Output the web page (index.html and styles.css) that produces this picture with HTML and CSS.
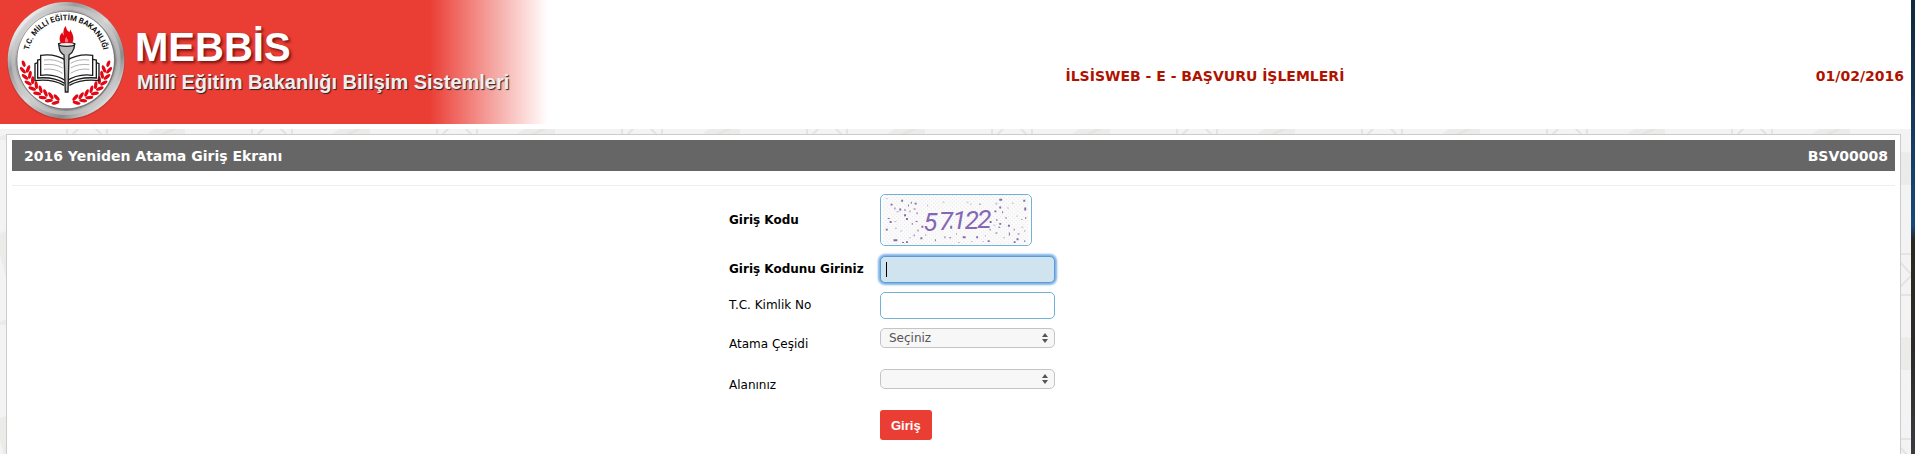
FILE: index.html
```html
<!DOCTYPE html>
<html lang="tr">
<head>
<meta charset="utf-8">
<title>MEBBİS</title>
<link rel="stylesheet" href="styles.css">
</head>
<body>
<div class="page">
  <svg class="backdrop" aria-hidden="true">
    <defs>
      <pattern id="tile" width="185" height="185" patternUnits="userSpaceOnUse">
        <g fill="#ebebe9">
          <path d="M143 140Q150 125 181 124Q212 125 216 140Z"/>
          <path d="M-3 140Q0 130 31 140Z"/>
          <path d="M30 166Q55 138 82 166L76 216H36Z"/>
          <path d="M0 48L6 46V92L0 70Z"/>
        </g>
        <g fill="none" stroke="#e4e4e2" stroke-width="2">
          <path d="M67 110V150M107 110V150M67 140L80 127M94 127L107 140M181 126L150 140M181 126L212 140"/>
          <path d="M40 69H76M40 110H76M48 75L62 90L48 104"/>
        </g>
      </pattern>
    </defs>
    <rect width="100%" height="100%" fill="url(#tile)"/>
  </svg>

  <header class="header">
    <div class="banner">
      <svg class="emblem" viewBox="0 0 384 372" role="img" aria-label="T.C. Millî Eğitim Bakanlığı">
        <defs>
          <linearGradient id="ring" x1="0" y1="0" x2="1" y2="1">
            <stop offset="0" stop-color="#8b8b8b"/><stop offset=".14" stop-color="#f4f4f4"/>
            <stop offset=".3" stop-color="#999"/><stop offset=".5" stop-color="#d8d8d8"/>
            <stop offset=".72" stop-color="#8a8a8a"/><stop offset=".88" stop-color="#eee"/>
            <stop offset="1" stop-color="#777"/>
          </linearGradient>
          <path id="arc" d="M86 196A114 114 0 1 1 310 196"/>
          <g id="leaves" fill="#e30613">
            <ellipse cx="196" cy="296" rx="12" ry="5" transform="rotate(35 196 296)"/>
            <ellipse cx="196" cy="312" rx="12" ry="5" transform="rotate(-28 196 312)"/>
          </g>
          <g id="laurel">
            <use href="#leaves" transform="rotate(13 197 180)"/>
            <use href="#leaves" transform="rotate(22 197 180)"/>
            <use href="#leaves" transform="rotate(31 197 180)"/>
            <use href="#leaves" transform="rotate(40 197 180)"/>
            <use href="#leaves" transform="rotate(49 197 180)"/>
            <use href="#leaves" transform="rotate(58 197 180)"/>
            <use href="#leaves" transform="rotate(67 197 180)"/>
            <use href="#leaves" transform="rotate(76 197 180)"/>
            <ellipse cx="71" cy="191" rx="5" ry="10" fill="#e30613" transform="rotate(-20 71 191)"/>
          </g>
        </defs>
        <circle cx="198" cy="184" r="177" fill="#a33" opacity=".5"/>
        <circle cx="198" cy="181" r="175" fill="url(#ring)"/>
        <circle cx="198" cy="181" r="158" fill="none" stroke="#c9c9c9" stroke-width="12" opacity=".6"/>
        <circle cx="198" cy="181" r="148" fill="#777"/>
        <circle cx="197" cy="180" r="145" fill="#fff"/>
        <text class="emblem-text"><textPath href="#arc" startOffset="50%" text-anchor="middle">T.C. MİLLİ EĞİTİM BAKANLIĞI</textPath></text>
        <use href="#laurel"/>
        <use href="#laurel" transform="translate(396 0) scale(-1 1)"/>
        <g fill="none" stroke="#1c1c1c" stroke-width="4">
          <path d="M199 182Q166 160 122 166V226Q166 220 199 244Q232 220 278 226V166Q234 160 199 182"/>
          <path d="M122 178L113 180V234Q162 230 194 250M278 178L289 180V234Q238 230 205 250"/>
          <path d="M113 188L105 191V242Q156 236 192 256M289 188L297 191V242Q246 236 208 256"/>
          <path stroke-width="2" stroke="#888" d="M132 180Q165 176 188 190M132 194Q165 190 188 204M132 208Q165 204 188 220M268 180Q235 176 212 190M268 194Q235 190 212 204M268 208Q235 204 212 220"/>
        </g>
        <path d="M176 131H224L222 145Q218 158 207 165L204 276H196L192 165Q180 158 178 145Z" fill="#bbb" stroke="#222" stroke-width="4"/>
        <ellipse cx="200" cy="133" rx="24" ry="6" fill="#eee" stroke="#222" stroke-width="4"/>
        <path d="M182 129Q173 112 187 97Q188 105 192 106Q186 91 197 78Q199 91 208 97Q211 93 210 88Q226 112 217 129Z" fill="#e30613"/>
        <path d="M196 127Q192 119 200 110Q200 117 204 119Q206 123 203 127Z" fill="#f77"/>
      </svg>
      <div class="brand">
        <div class="brand-name">MEBBİS</div>
        <div class="brand-sub">Millî Eğitim Bakanlığı Bilişim Sistemleri</div>
      </div>
    </div>
    <div class="app-title">İLSİSWEB - E - BAŞVURU İŞLEMLERİ</div>
    <div class="date">01/02/2016</div>
  </header>

  <main class="panel">
    <div class="bar"><h1 class="bar-title">2016 Yeniden Atama Giriş Ekranı</h1><span>BSV00008</span></div>
    <form class="form">
      <div class="row row-code">
        <span class="label strong">Giriş Kodu</span>
        <svg class="captcha" viewBox="0 0 152 52" role="img" aria-label="57122">
          <defs><pattern id="grain" width="4" height="4" patternUnits="userSpaceOnUse"><path d="M0 0h1v1H0zM2 2h1v1H2z" fill="#e4e4e4"/></pattern></defs>
          <rect width="152" height="52" fill="#fbfbfb"/><rect width="152" height="52" fill="url(#grain)"/>
          <text class="captcha-text" x="42 58 72 85 98" y="37 36 35 35 34">57122</text>
          <g fill="#8569a8">
            <path d="M8 9h2v2h-2zM12 13h1v2h-1zM19 5h2v2h-2zM17 14h2v2h-2zM22 15h2v1h-2zM22 20h2v2h-2zM26 10h1v2h-1zM29 7h1v2h-1zM33 8h2v2h-2zM32 14h2v1h-2zM35 18h1v2h-1zM5 24h2v1h-2zM7 27h2v2h-2zM3 35h2v2h-2zM13 34h1v1h-1zM24 24h2v2h-2zM30 29h1v2h-1zM34 27h2v1h-2zM36 36h1v2h-1zM40 32h2v2h-2zM11 46h4v2h-4zM20 49h2v1h-2zM24 48h2v2h-2zM32 41h1v2h-1zM39 44h2v2h-2zM44 41h1v1h-1z"/>
            <path d="M70 32h2v3h-2zM54 46h1v2h-1zM64 43h1v2h-1zM69 44h2v1h-2zM76 40h1v1h-1zM83 43h3v2h-3zM92 48h1v1h-1zM97 43h2v2h-2zM91 9h1v1h-1zM100 9h2v1h-2zM109 47h2v2h-2zM106 42h1v1h-1zM121 4h3v2h-3zM121 12h2v2h-2zM116 16h2v2h-2zM124 17h1v2h-1zM111 27h2v2h-2zM118 25h1v2h-1zM121 29h2v2h-2zM111 35h1v2h-1zM117 39h2v1h-2zM120 33h2v1h-2zM130 31h2v2h-2zM131 39h1v3h-1zM136 35h1v2h-1zM140 40h2v1h-2zM136 48h2v2h-2zM139 45h2v2h-2zM146 5h2v2h-2zM147 13h2v3h-2zM148 23h1v2h-1zM144 25h1v1h-1zM147 37h1v1h-1zM147 47h1v2h-1z"/>
          </g>
          <path fill="#c5b8d6" d="M3 3h2v1h-2zM14 17h3v1h-3zM27 16h2v2h-2zM12 27h2v1h-2zM18 37h2v1h-2zM27 44h2v1h-2zM46 10h1v2h-1zM62 7h2v1h-2zM78 49h2v1h-2zM87 7h2v1h-2zM103 48h2v1h-2zM117 8h2v2h-2zM129 13h2v1h-2zM127 23h2v2h-2zM115 31h2v1h-2zM139 21h1v2h-1zM134 8h2v1h-2zM125 44h2v1h-2zM144 33h2v1h-2z"/>
        </svg>
      </div>
      <div class="row">
        <label class="label strong" for="code">Giriş Kodunu Giriniz</label>
        <span class="field"><input class="input active" id="code" type="text" autocomplete="off"><span class="caret"></span></span>
      </div>
      <div class="row">
        <label class="label" for="tc">T.C. Kimlik No</label>
        <input class="input" id="tc" type="text">
      </div>
      <div class="row row-select">
        <label class="label" for="kind">Atama Çeşidi</label>
        <span class="field field-select"><select class="select" id="kind"><option>Seçiniz</option></select><svg class="arrows" viewBox="0 0 6 12" aria-hidden="true"><path d="M3 1L6 5H0ZM0 7H6L3 11Z"/></svg></span>
      </div>
      <div class="row row-select">
        <label class="label" for="field">Alanınız</label>
        <span class="field field-select"><select class="select" id="field"><option></option></select><svg class="arrows" viewBox="0 0 6 12" aria-hidden="true"><path d="M3 1L6 5H0ZM0 7H6L3 11Z"/></svg></span>
      </div>
      <div class="row row-submit"><span></span><button class="submit" type="submit">Giriş</button></div>
    </form>
  </main>
</div>
<div class="edge"></div>
</body>
</html>
```
FILE: styles.css
```css
* { box-sizing: border-box; }
body {
  margin: 0;
  min-height: 100vh;
  display: flex;
  font-family: Verdana, "DejaVu Sans", sans-serif;
  font-size: 12px;
  color: #000;
}
.page {
  position: relative;
  flex: 1;
  display: flex;
  flex-direction: column;
  background: #f3f3f3;
}
.backdrop { position: absolute; inset: 0; width: 100%; height: 100%; }
.edge {
  width: 4px;
  background: linear-gradient(#12283c 0, #17395a 120px, #174a78 225px, #292825 240px, #2c2b29 350px, #3a3b40 454px);
}
.header {
  position: relative;
  display: flex;
  background: #fff;
  padding-bottom: 5px;
  padding-right: 7px;
  color: #b01200;
  font-size: 14px;
  font-weight: bold;
}
.banner {
  display: flex;
  width: 548px;
  height: 124px;
  background: linear-gradient(to right, #ea3e35 430px, #fff 548px);
}
.emblem { width: 128px; height: 124px; flex: none; }
.emblem-text { font: bold 23px Roboto, sans-serif; fill: #111; }
.brand {
  padding: 24px 0 0 7px;
  font-family: "Liberation Sans", Arial, sans-serif;
  white-space: nowrap;
}
.brand-name {
  font-size: 40px;
  line-height: 46px;
  color: #fff;
  text-shadow: 2px 2px 3px rgba(70, 0, 0, .7);
}
.brand-sub {
  padding-left: 2px;
  font-size: 20px;
  line-height: 24px;
  color: #eee;
  text-shadow: 1px 1px 1px #222;
}
.app-title { flex: 1; padding: 67px 0 0 46px; line-height: 18px; text-align: center; }
.date { padding-top: 67px; line-height: 18px; }
.panel {
  position: relative;
  flex: 1;
  margin: 5px 10px 0 6px;
  padding: 5px 5px 0;
  background: #fff;
  border: 1px solid #ccc;
  border-bottom: 0;
}
.bar {
  display: flex;
  justify-content: space-between;
  align-items: center;
  height: 31px;
  padding: 0 7px 0 12px;
  background: #666;
  color: #fff;
  font-size: 14px;
  font-weight: bold;
}
.bar-title { margin: 0; font-size: 14px; }
.form {
  margin-top: 14px;
  padding-top: 8px;
  border-top: 1px solid #eee;
  display: flex;
  flex-direction: column;
  align-items: center;
}
.row {
  display: grid;
  grid-template-columns: 151px 1fr;
  width: 449px;
  min-height: 36px;
  align-items: center;
  justify-items: start;
}
.row-code { min-height: 52px; margin-bottom: 5px; }
.row-select { min-height: 41px; }
.row-submit { margin-top: 2px; }
.label { font-size: 12px; }
.strong { font-weight: bold; }
.captcha {
  width: 152px;
  height: 52px;
  border: 1px solid #72b2d8;
  border-radius: 5px;
}
.captcha-text { font: italic 27px Roboto, sans-serif; fill: #8467b5; }
.field { position: relative; display: flex; }
.field-select { align-self: start; margin-top: 5px; }
.caret {
  position: absolute;
  left: 6px;
  top: 6px;
  width: 1px;
  height: 15px;
  background: #000;
}
.input {
  width: 175px;
  height: 27px;
  padding: 0 6px;
  border: 1px solid #72b2d8;
  border-radius: 5px;
  background: #fff;
  font: 13px Verdana, "DejaVu Sans", sans-serif;
  outline: none;
}
.active {
  background: #d0e4f0;
  border-color: #5b9bd5;
  box-shadow: 0 0 2px 2px #7fb3e6;
}
.select {
  appearance: none;
  width: 175px;
  height: 20px;
  padding: 0 20px 0 8px;
  border: 1px solid #c4c4c4;
  border-radius: 5px;
  background: #f7f7f7;
  color: #555;
  font: 12px Verdana, "DejaVu Sans", sans-serif;
}
.arrows { position: absolute; right: 7px; top: 4px; width: 6px; height: 12px; fill: #555; }
.submit {
  height: 30px;
  padding: 0 11px;
  border: 0;
  border-radius: 3px;
  background: #ea3e35;
  color: #fff;
  font: bold 13px "Liberation Sans", Arial, sans-serif;
}
```
